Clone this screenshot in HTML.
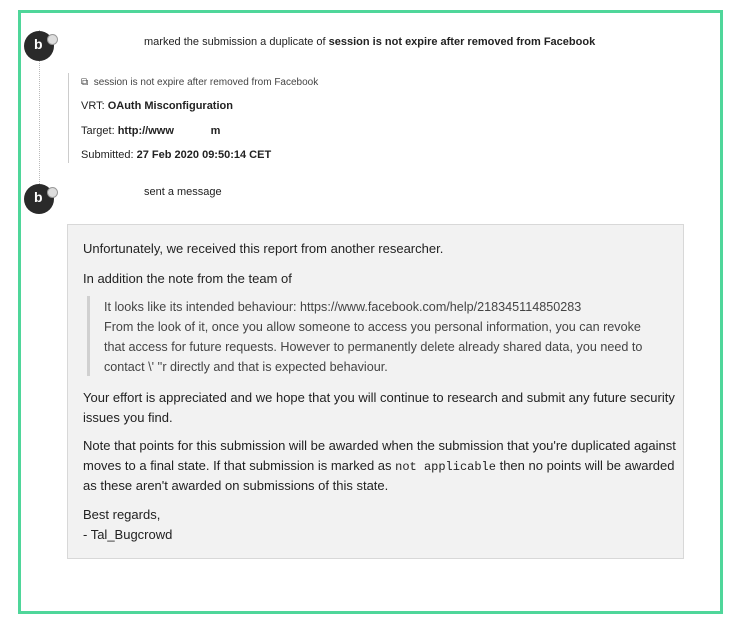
<!DOCTYPE html>
<html><head><style>
body{margin:0;width:737px;height:643px;background:#fff;position:relative;font-family:"Liberation Sans",sans-serif;color:#222;overflow:hidden}
.g{position:absolute;left:18px;top:10px;width:699px;height:598px;border:3px solid #4fd69a}
.t{position:absolute;white-space:nowrap}
.av{position:absolute;width:30px;height:30px;border-radius:50%;background:#2a2a2a}
.av:after{content:"b";position:absolute;left:10px;top:5px;color:#fff;font-weight:bold;font-size:14px}
.bd{position:absolute;width:9px;height:9px;border-radius:50%;background:#ddd;border:1px solid #999}
.box{position:absolute;left:67px;top:224px;width:615px;height:333px;background:#f2f2f2;border:1px solid #d8d8d8}
.b{font-size:13px;color:#222}
.q{font-size:12.6px;color:#444}
</style></head><body>
<div class="g"></div>
<div style="position:absolute;left:39px;top:30px;height:170px;border-left:1px dotted #bbb"></div>
<div class="av" style="left:24px;top:31px"></div><div class="bd" style="left:47px;top:34px"></div>
<div class="av" style="left:24px;top:184px"></div><div class="bd" style="left:47px;top:187px"></div>
<div class="t" style="left:144px;top:36px;font-size:11px">marked the submission a duplicate of <b>session is not expire after removed from Facebook</b></div>
<div style="position:absolute;left:68px;top:73px;height:90px;border-left:1px solid #ccc"></div>
<div class="t" style="left:81px;top:77px;font-size:10px;color:#444">⧉&nbsp; session is not expire after removed from Facebook</div>
<div class="t" style="left:81px;top:100px;font-size:11px">VRT: <b>OAuth Misconfiguration</b></div>
<div class="t" style="left:81px;top:125px;font-size:11px">Target: <b>http://www &nbsp; &nbsp; &nbsp; &nbsp; &nbsp; &nbsp;m</b></div>
<div class="t" style="left:81px;top:149px;font-size:11px">Submitted: <b>27 Feb 2020 09:50:14 CET</b></div>
<div class="t" style="left:144px;top:186px;font-size:11px">sent a message</div>
<div class="box"></div>
<div class="t b" style="left:83px;top:241px">Unfortunately, we received this report from another researcher.</div>
<div class="t b" style="left:83px;top:271px">In addition the note from the team of</div>
<div style="position:absolute;left:87px;top:296px;height:80px;border-left:3px solid #d0d0d0"></div>
<div class="t q" style="left:104px;top:300px">It looks like its intended behaviour: https://www.facebook.com/help/218345114850283</div>
<div class="t q" style="left:104px;top:320px">From the look of it, once you allow someone to access you personal information, you can revoke</div>
<div class="t q" style="left:104px;top:340px">that access for future requests. However to permanently delete already shared data, you need to</div>
<div class="t q" style="left:104px;top:360px">contact \' ''r directly and that is expected behaviour.</div>
<div class="t b" style="left:83px;top:390px">Your effort is appreciated and we hope that you will continue to research and submit any future security</div>
<div class="t b" style="left:83px;top:410px">issues you find.</div>
<div class="t b" style="left:83px;top:438px">Note that points for this submission will be awarded when the submission that you're duplicated against</div>
<div class="t b" style="left:83px;top:458px">moves to a final state. If that submission is marked as <span style="font-family:'Liberation Mono',monospace;font-size:12px">not applicable</span> then no points will be awarded</div>
<div class="t b" style="left:83px;top:478px">as these aren't awarded on submissions of this state.</div>
<div class="t b" style="left:83px;top:507px">Best regards,</div>
<div class="t b" style="left:83px;top:527px">- Tal_Bugcrowd</div>
</body></html>
